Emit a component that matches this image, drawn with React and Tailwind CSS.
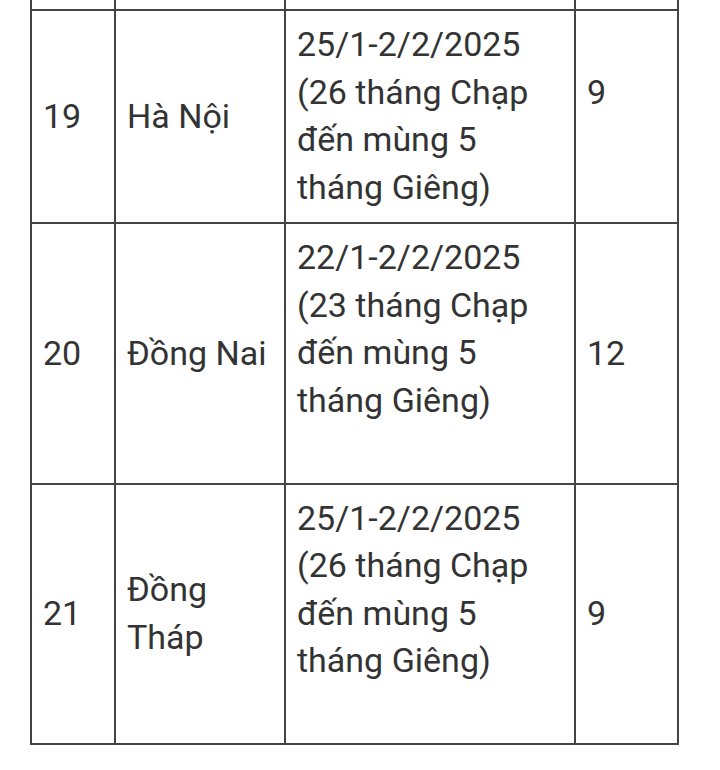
const rows = [
  {
    no: "19",
    place: ["Hà Nội"],
    dates: ["25/1-2/2/2025", "(26 tháng Chạp", "đến mùng 5", "tháng Giêng)"],
    days: "9",
    extra: false,
    daysExtra: true,
  },
  {
    no: "20",
    place: ["Đồng Nai"],
    dates: ["22/1-2/2/2025", "(23 tháng Chạp", "đến mùng 5", "tháng Giêng)"],
    days: "12",
    extra: true,
    daysExtra: false,
  },
  {
    no: "21",
    place: ["Đồng", "Tháp"],
    dates: ["25/1-2/2/2025", "(26 tháng Chạp", "đến mùng 5", "tháng Giêng)"],
    days: "9",
    extra: true,
    daysExtra: false,
  },
];

const cell = "border-2 border-[#444] px-[11px] py-[9px] align-middle";

function App() {
  return (
    <div
      className="w-[720px] h-[770px] bg-white overflow-hidden pl-[30px] text-[#333] text-[34px] leading-[47.5px]"
      style={{ fontFamily: "Roboto, 'Noto Sans', sans-serif" }}
    >
      <table className="table-fixed border-collapse w-[647px] -mt-[2px]">
        <colgroup>
          <col className="w-[84px]" />
          <col className="w-[170px]" />
          <col className="w-[290px]" />
          <col className="w-[103px]" />
        </colgroup>
        <tbody>
          <tr className="h-[12px]">
            <td className="border-2 border-[#444] border-t-0 p-0"></td>
            <td className="border-2 border-[#444] border-t-0 p-0"></td>
            <td className="border-2 border-[#444] border-t-0 p-0"></td>
            <td className="border-2 border-[#444] border-t-0 p-0"></td>
          </tr>
          {rows.map((r) => (
            <tr key={r.no}>
              <td className={cell}>{r.no}</td>
              <td className={cell}>
                {r.place.map((p) => (
                  <div key={p} className="whitespace-nowrap">{p}</div>
                ))}
              </td>
              <td className={cell + " pt-[10px] pb-[11px]"}>
                {r.dates.map((d) => (
                  <div key={d} className="whitespace-nowrap">{d}</div>
                ))}
                {r.extra && <div className="h-[47.5px]"></div>}
              </td>
              <td className={cell}>
                <div>{r.days}</div>
                {r.daysExtra && <div className="h-[47.5px]"></div>}
              </td>
            </tr>
          ))}
        </tbody>
      </table>
    </div>
  );
}

export default App;
